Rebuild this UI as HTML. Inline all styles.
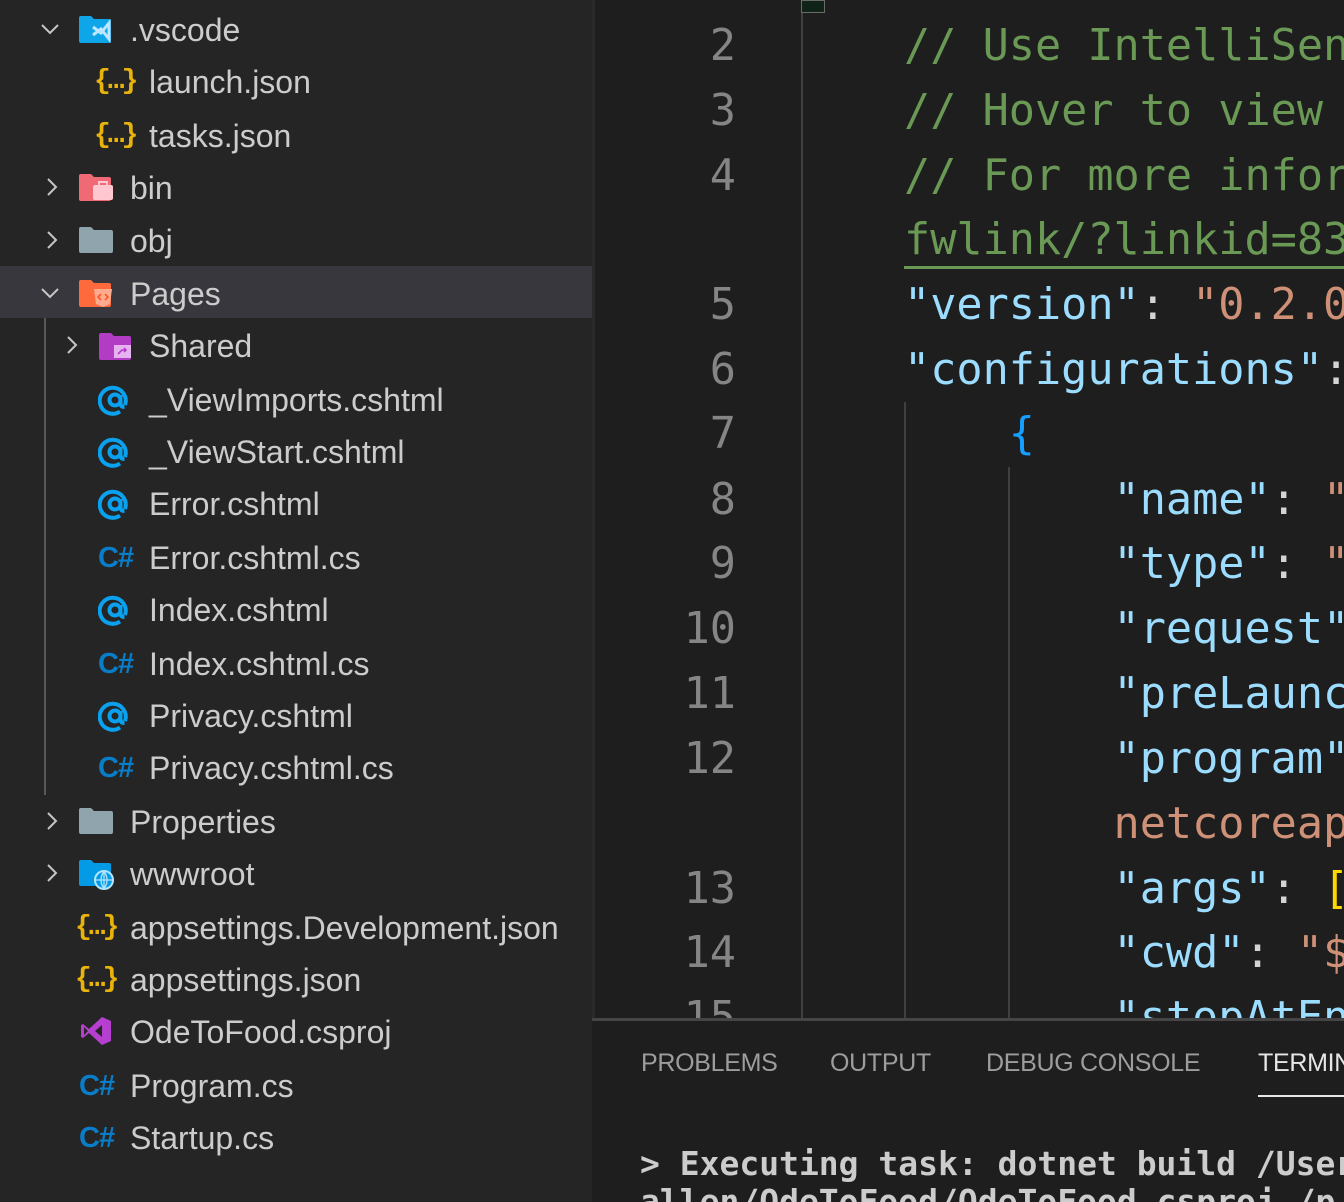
<!DOCTYPE html>
<html style="overflow:hidden"><head><meta charset="utf-8"><style>
*{margin:0;padding:0;box-sizing:border-box}
html,body{width:1344px;height:1202px;overflow:hidden}
body{background:#1e1e1e;position:relative;font-family:"Liberation Sans",sans-serif}
#side{position:absolute;left:0;top:0;width:592px;height:1202px;background:#252526;overflow:hidden}
.row{position:absolute;left:0;width:592px;height:52px;line-height:54px;color:#cccccc;font-size:32px;white-space:nowrap}
.row .t{position:absolute;top:0}
.chev{position:absolute;top:16px;width:20px;height:20px}
.ic{position:absolute}
.json{position:absolute;top:0;font-family:"Liberation Mono",monospace;font-size:28px;font-weight:bold;letter-spacing:-3px;color:#e8b30a}
.at{position:absolute;top:10px}
.cs{position:absolute;top:0;color:#0a7dc8;font-size:29px;font-weight:bold;letter-spacing:-1px}
#ed{position:absolute;left:592px;top:0;width:752px;height:1018px;background:#1e1e1e;overflow:hidden}
.ln{position:absolute;right:608px;width:100px;text-align:right;color:#858585;font-family:"DejaVu Sans Mono",monospace;font-size:43.5px;line-height:65px;margin-top:2px}
.cl{position:absolute;left:312px;font-family:"DejaVu Sans Mono",monospace;font-size:43.5px;line-height:65px;white-space:pre;color:#d4d4d4;margin-top:2px}
.c{color:#6a9955}.k{color:#9cdcfe}.s{color:#ce9178}.b{color:#179fff}.y{color:#ffd700}
.g{position:absolute;width:2px;background:#404040}
#panel{position:absolute;left:592px;top:1018px;width:752px;height:184px;background:#1e1e1e;border-top:3px solid #454545;overflow:hidden}
.tab{position:absolute;top:28px;font-size:25px;color:#9d9d9d;letter-spacing:-0.3px}
</style></head><body>
<svg width="0" height="0" style="position:absolute"><defs><g id="at"><path d="M27 22 A13 13 0 1 0 22 28.5" fill="none" stroke="#0aa1ef" stroke-width="4"/><circle cx="17" cy="17" r="5.5" fill="none" stroke="#0aa1ef" stroke-width="4"/><path d="M22.5 12v8q0 4 4 4" fill="none" stroke="#0aa1ef" stroke-width="4"/></g></defs></svg>
<div id="side">
 <div style="position:absolute;left:0;top:266px;width:592px;height:52px;background:#37373d"></div>
 <div style="position:absolute;left:44px;top:318px;width:2px;height:477px;background:#585858"></div>

 <div class="row" style="top:3px">
  <svg class="chev" style="left:40px" viewBox="0 0 20 20"><path d="M2 6l8 8 8-8" fill="none" stroke="#c5c5c5" stroke-width="2"/></svg>
  <svg class="ic" style="left:79px;top:12px" width="36" height="30" viewBox="0 0 36 30"><path d="M0 3q0-2 2-2h10l3 3h15q2 0 2 2v20q0 2-2 2H2q-2 0-2-2z" fill="#0ea5e9"/><path d="M14 12l8 6 8-10v16l-8-10-8 6" fill="none" stroke="#bfe6ff" stroke-width="3"/></svg>
  <span class="t" style="left:130px">.vscode</span></div>
 <div class="row" style="top:55px"><span class="json" style="left:94px">{…}</span><span class="t" style="left:149px">launch.json</span></div>
 <div class="row" style="top:109px"><span class="json" style="left:94px">{…}</span><span class="t" style="left:149px">tasks.json</span></div>
 <div class="row" style="top:161px">
  <svg class="chev" style="left:42px" viewBox="0 0 20 20"><path d="M6 2l8 8-8 8" fill="none" stroke="#c5c5c5" stroke-width="2"/></svg>
  <svg class="ic" style="left:79px;top:12px" width="36" height="30" viewBox="0 0 36 30"><path d="M0 3q0-2 2-2h10l3 3h15q2 0 2 2v20q0 2-2 2H2q-2 0-2-2z" fill="#f06a75"/><rect x="14" y="12" width="20" height="15" rx="2" fill="#ffc8d0"/><rect x="20" y="9" width="8" height="4" fill="none" stroke="#ffc8d0" stroke-width="2"/></svg>
  <span class="t" style="left:130px">bin</span></div>
 <div class="row" style="top:214px">
  <svg class="chev" style="left:42px" viewBox="0 0 20 20"><path d="M6 2l8 8-8 8" fill="none" stroke="#c5c5c5" stroke-width="2"/></svg>
  <svg class="ic" style="left:79px;top:12px" width="34" height="28" viewBox="0 0 34 28"><path d="M0 3q0-2 2-2h10l3 3h17q2 0 2 2v19q0 2-2 2H2q-2 0-2-2z" fill="#90a4ae"/></svg>
  <span class="t" style="left:130px">obj</span></div>
 <div class="row" style="top:267px">
  <svg class="chev" style="left:40px" viewBox="0 0 20 20"><path d="M2 6l8 8 8-8" fill="none" stroke="#c5c5c5" stroke-width="2"/></svg>
  <svg class="ic" style="left:79px;top:12px" width="36" height="30" viewBox="0 0 36 30"><path d="M0 3q0-2 2-2h10l3 3h15q2 0 2 2v20q0 2-2 2H2q-2 0-2-2z" fill="#ff6a3d"/><path d="M15 10h18l-2 15-7 3-7-3z" fill="#ffab8f"/><path d="M22 15l-3 3 3 3M26 15l3 3-3 3" fill="none" stroke="#ff5722" stroke-width="1.6"/></svg>
  <span class="t" style="left:130px">Pages</span></div>
 <div class="row" style="top:319px">
  <svg class="chev" style="left:62px" viewBox="0 0 20 20"><path d="M6 2l8 8-8 8" fill="none" stroke="#c5c5c5" stroke-width="2"/></svg>
  <svg class="ic" style="left:99px;top:13px" width="36" height="30" viewBox="0 0 36 30"><path d="M0 3q0-2 2-2h10l3 3h15q2 0 2 2v20q0 2-2 2H2q-2 0-2-2z" fill="#b23cc4"/><rect x="15" y="13" width="17" height="13" fill="#e6b3f0"/><path d="M19 22l4-4h4M25 16l2 2-2 2" fill="none" stroke="#b23cc4" stroke-width="1.6"/></svg>
  <span class="t" style="left:149px">Shared</span></div>
 <div class="row" style="top:373px"><svg class="at" style="left:98px" width="34" height="34" viewBox="0 0 34 34"><use href="#at"/></svg><span class="t" style="left:149px">_ViewImports.cshtml</span></div>
 <div class="row" style="top:425px"><svg class="at" style="left:98px" width="34" height="34" viewBox="0 0 34 34"><use href="#at"/></svg><span class="t" style="left:149px">_ViewStart.cshtml</span></div>
 <div class="row" style="top:477px"><svg class="at" style="left:98px" width="34" height="34" viewBox="0 0 34 34"><use href="#at"/></svg><span class="t" style="left:149px">Error.cshtml</span></div>
 <div class="row" style="top:531px"><span class="cs" style="left:98px">C#</span><span class="t" style="left:149px">Error.cshtml.cs</span></div>
 <div class="row" style="top:583px"><svg class="at" style="left:98px" width="34" height="34" viewBox="0 0 34 34"><use href="#at"/></svg><span class="t" style="left:149px">Index.cshtml</span></div>
 <div class="row" style="top:637px"><span class="cs" style="left:98px">C#</span><span class="t" style="left:149px">Index.cshtml.cs</span></div>
 <div class="row" style="top:689px"><svg class="at" style="left:98px" width="34" height="34" viewBox="0 0 34 34"><use href="#at"/></svg><span class="t" style="left:149px">Privacy.cshtml</span></div>
 <div class="row" style="top:741px"><span class="cs" style="left:98px">C#</span><span class="t" style="left:149px">Privacy.cshtml.cs</span></div>
 <div class="row" style="top:795px">
  <svg class="chev" style="left:42px" viewBox="0 0 20 20"><path d="M6 2l8 8-8 8" fill="none" stroke="#c5c5c5" stroke-width="2"/></svg>
  <svg class="ic" style="left:79px;top:12px" width="34" height="28" viewBox="0 0 34 28"><path d="M0 3q0-2 2-2h10l3 3h17q2 0 2 2v19q0 2-2 2H2q-2 0-2-2z" fill="#90a4ae"/></svg>
  <span class="t" style="left:130px">Properties</span></div>
 <div class="row" style="top:847px">
  <svg class="chev" style="left:42px" viewBox="0 0 20 20"><path d="M6 2l8 8-8 8" fill="none" stroke="#c5c5c5" stroke-width="2"/></svg>
  <svg class="ic" style="left:79px;top:12px" width="36" height="32" viewBox="0 0 36 32"><path d="M0 3q0-2 2-2h10l3 3h15q2 0 2 2v19q0 2-2 2H2q-2 0-2-2z" fill="#039be5"/><circle cx="25" cy="21" r="9" fill="#039be5" stroke="#b3e5fc" stroke-width="2"/><path d="M16 21h18M25 12v18M25 12q-6 9 0 18M25 12q6 9 0 18" fill="none" stroke="#b3e5fc" stroke-width="1.3"/></svg>
  <span class="t" style="left:130px">wwwroot</span></div>
 <div class="row" style="top:901px"><span class="json" style="left:75px">{…}</span><span class="t" style="left:130px">appsettings.Development.json</span></div>
 <div class="row" style="top:953px"><span class="json" style="left:75px">{…}</span><span class="t" style="left:130px">appsettings.json</span></div>
 <div class="row" style="top:1005px">
  <svg class="ic" style="left:80px;top:11px" width="32" height="30" viewBox="0 0 32 30"><path d="M22 1l9 4v20l-9 4L9 17l-6 5-2-1V9l2-1 6 5zM22 9l-7 6 7 6z M4 11v8l4-4z" fill="#b73fd0" fill-rule="evenodd"/></svg>
  <span class="t" style="left:130px">OdeToFood.csproj</span></div>
 <div class="row" style="top:1059px"><span class="cs" style="left:79px">C#</span><span class="t" style="left:130px">Program.cs</span></div>
 <div class="row" style="top:1111px"><span class="cs" style="left:79px">C#</span><span class="t" style="left:130px">Startup.cs</span></div>
</div>

<div id="ed">
 <div style="position:absolute;left:0;top:0;width:3px;height:1018px;background:#2a2a2a"></div>
 <div class="g" style="left:209px;top:0;height:1018px"></div>
 <div style="position:absolute;left:209px;top:0;width:24px;height:13px;background:#0f2417;border:1.5px solid #6a6a6a"></div>
 <div class="g" style="left:312px;top:402px;height:616px"></div>
 <div class="g" style="left:416px;top:467px;height:551px"></div>
 <div style="position:absolute;left:312px;top:266px;width:440px;height:3px;background:#6a9955"></div>

 <div class="ln" style="top:12px">2</div>
 <div class="ln" style="top:77px">3</div>
 <div class="ln" style="top:142px">4</div>
 <div class="ln" style="top:271px">5</div>
 <div class="ln" style="top:336px">6</div>
 <div class="ln" style="top:400px">7</div>
 <div class="ln" style="top:466px">8</div>
 <div class="ln" style="top:530px">9</div>
 <div class="ln" style="top:595px">10</div>
 <div class="ln" style="top:660px">11</div>
 <div class="ln" style="top:725px">12</div>
 <div class="ln" style="top:855px">13</div>
 <div class="ln" style="top:919px">14</div>
 <div class="ln" style="top:984px">15</div>

 <div class="cl c" style="top:12px">// Use IntelliSense to learn about possible attributes.</div>
 <div class="cl c" style="top:77px">// Hover to view descriptions of existing attributes.</div>
 <div class="cl c" style="top:142px">// For more information, visit: https://go.microsoft.com/</div>
 <div class="cl c" style="top:206px">fwlink/?linkid=830387</div>
 <div class="cl" style="top:271px"><span class="k">"version"</span>: <span class="s">"0.2.0"</span>,</div>
 <div class="cl" style="top:336px"><span class="k">"configurations"</span>: <span class="y">[</span></div>
 <div class="cl" style="top:400px">    <span class="b">{</span></div>
 <div class="cl" style="top:466px">        <span class="k">"name"</span>: <span class="s">".NET Core Launch (web)"</span>,</div>
 <div class="cl" style="top:530px">        <span class="k">"type"</span>: <span class="s">"coreclr"</span>,</div>
 <div class="cl" style="top:595px">        <span class="k">"request"</span>: <span class="s">"launch"</span>,</div>
 <div class="cl" style="top:660px">        <span class="k">"preLaunchTask"</span>: <span class="s">"build"</span>,</div>
 <div class="cl" style="top:725px">        <span class="k">"program"</span>: <span class="s">"${workspaceFolder}/bin/Debug/</span></div>
 <div class="cl s" style="top:790px">        netcoreapp3.0/OdeToFood.dll"</div>
 <div class="cl" style="top:855px">        <span class="k">"args"</span>: <span class="y">[]</span>,</div>
 <div class="cl" style="top:919px">        <span class="k">"cwd"</span>: <span class="s">"${workspaceFolder}"</span>,</div>
 <div class="cl" style="top:984px">        <span class="k">"stopAtEntry"</span>: false,</div>
</div>

<div id="panel">
 <span class="tab" style="left:49px">PROBLEMS</span>
 <span class="tab" style="left:238px">OUTPUT</span>
 <span class="tab" style="left:394px">DEBUG CONSOLE</span>
 <span class="tab" style="left:666px;color:#e7e7e7">TERMINAL</span>
 <div style="position:absolute;left:666px;top:74px;width:90px;height:2px;background:#e7e7e7"></div>
 <div style="position:absolute;left:48px;top:124px;font-family:'DejaVu Sans Mono',monospace;font-weight:bold;font-size:33px;line-height:38px;color:#cccccc;white-space:pre">&gt; Executing task: dotnet build /Users/scott
allen/OdeToFood/OdeToFood.csproj /p</div>
</div>
</body></html>
